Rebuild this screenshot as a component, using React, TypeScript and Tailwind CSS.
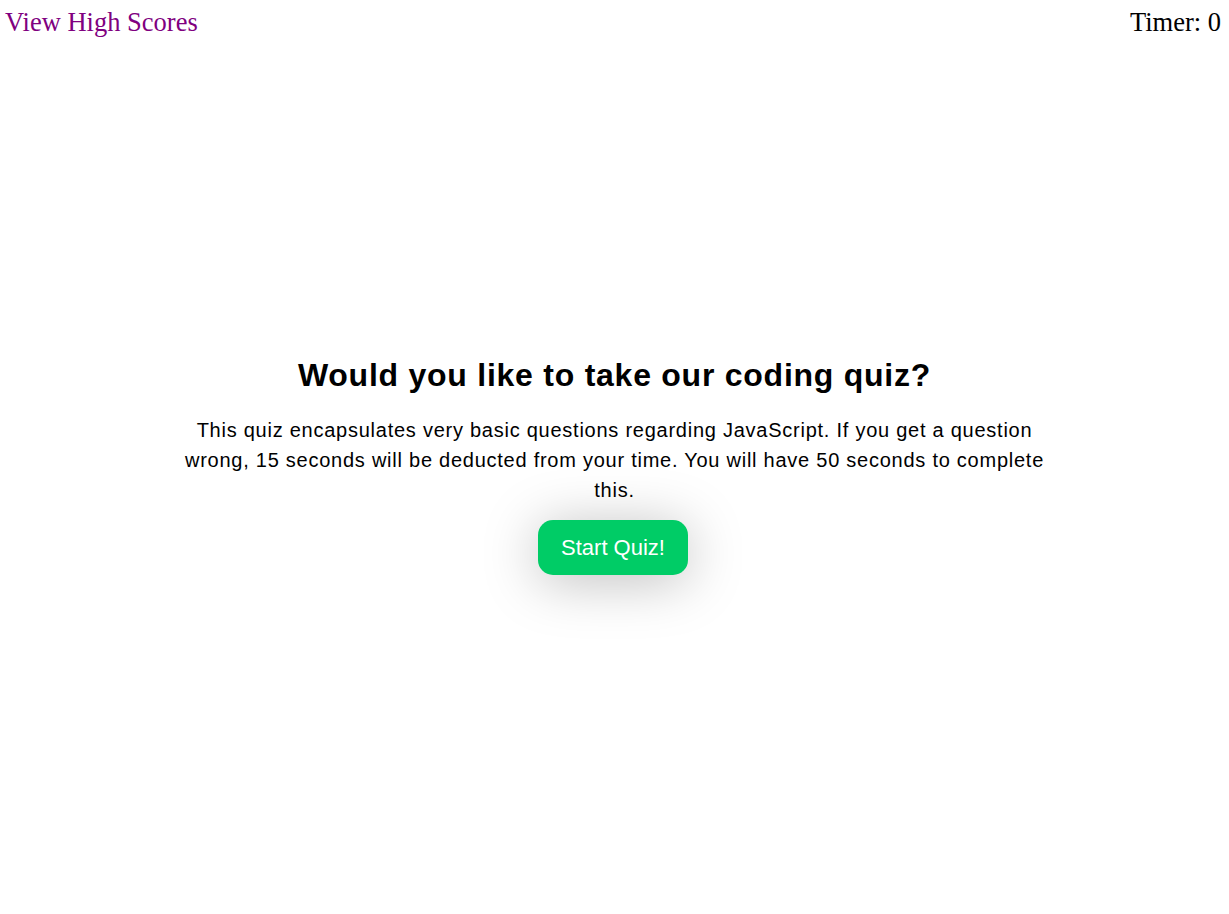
export default function App() {
  return (
    <div className="min-h-[914px] bg-white">
      <header className="flex items-start justify-between px-[5px] pt-[7px] font-['Liberation_Serif',serif] text-[26.5px] leading-[30px]">
        <a href="#" className="text-[#800080]">
          View High Scores
        </a>
        <span className="pr-[3px] text-black">Timer: 0</span>
      </header>

      <main className="mx-auto mt-[318px] flex w-[72%] flex-col items-center text-center font-['Liberation_Sans',Arial,sans-serif]">
        <h1 className="text-[32px] font-bold leading-[40px] tracking-[0.75px] text-black">
          Would you like to take our coding quiz?
        </h1>
        <p className="mt-[20px] text-[20px] leading-[30px] tracking-[0.75px] text-black">
          This quiz encapsulates very basic questions regarding JavaScript. If you get a question wrong, 15 seconds will be
          deducted from your time. You will have 50 seconds to complete this.
        </p>
        <button className="mr-[3px] mt-[15px] h-[55px] w-[150px] rounded-[15px] bg-[#00cc66] text-[22px] text-white shadow-[0_6px_55px_rgba(0,0,0,0.26)]">
          Start Quiz!
        </button>
      </main>
    </div>
  );
}
